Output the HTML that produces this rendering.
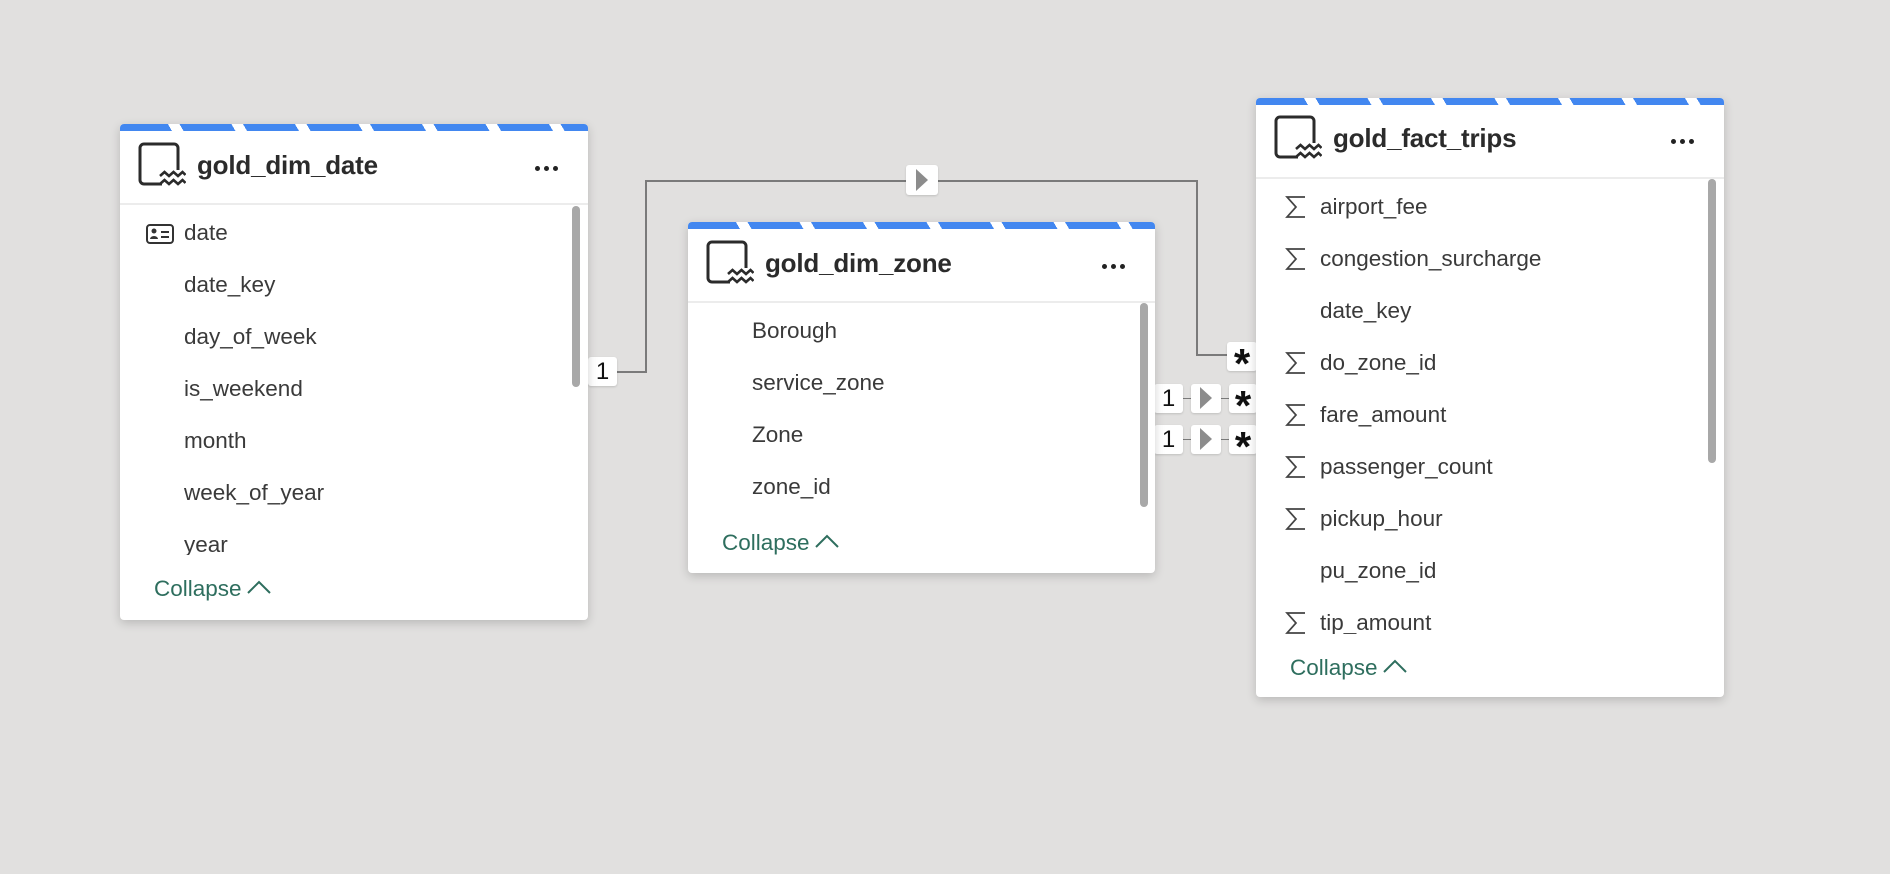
<!DOCTYPE html>
<html><head><meta charset="utf-8"><style>
*{box-sizing:border-box;margin:0;padding:0}
body{width:1890px;height:874px;background:#e1e0df;position:relative;overflow:hidden;font-family:"Liberation Sans",sans-serif;color:#333}
.card{position:absolute;background:#fff;border-radius:4px;box-shadow:0 3px 10px rgba(0,0,0,.18);overflow:hidden}
.stripe{position:absolute;left:0;top:0;right:0;height:7px;background:repeating-linear-gradient(60deg,#4287f0 0 45px,#fff 45px 55px)}
.ti{position:absolute;left:18px;top:18px}
.title{position:absolute;left:77px;top:26px;font-size:26px;font-weight:bold;color:#2b2b2b;letter-spacing:-0.2px}
.dots{position:absolute;top:34px;width:30px;height:6px}
.dots i{display:inline-block;width:5px;height:5px;border-radius:50%;background:#222;margin-right:4px}
.sep{position:absolute;left:0;right:0;top:79px;height:2px;background:#ececec}
.list{position:absolute;left:0;right:0;top:81px;overflow:hidden}
.row{position:absolute;left:64px;font-size:22.5px;color:#3a3a3a;height:30px;line-height:30px;white-space:nowrap}
.sig{position:absolute;left:-35px;top:3px}
.sb{position:absolute;width:8px;border-radius:4px;background:#a8a8a8}
.col{position:absolute;left:34px;font-size:22.5px;color:#2e6e5e;height:30px;line-height:30px}
.col svg{vertical-align:middle;margin-left:4px;margin-top:-6px}
.ln{position:absolute;background:#7a7a7a}
.bx{position:absolute;background:#fff;border-radius:3px;box-shadow:0 1px 2px rgba(0,0,0,.15);font-size:24px;color:#111;text-align:center}
.ast{font-size:42px;font-weight:bold;line-height:44px}
.tri{width:0;height:0;border-top:11px solid transparent;border-bottom:11px solid transparent;border-left:12px solid #8c8c8c;position:absolute;left:10px;top:4px}
</style></head><body>

<svg width="0" height="0" style="position:absolute"><defs>
<symbol id="tb" viewBox="0 0 48 44"><path d="M24 42H6a4 4 0 0 1-4-4V6a4 4 0 0 1 4-4h30a4 4 0 0 1 4 4v22" fill="none" stroke="#2b2b2b" stroke-width="3"/><path d="M22 34l4.5-4 4.5 4 4.5-4 4.5 4 4.5-4 3 3M22 42l4.5-4 4.5 4 4.5-4 4.5 4 4.5-4 3 3" fill="none" stroke="#2b2b2b" stroke-width="2.6"/></symbol>
<symbol id="sg" viewBox="0 0 22 24"><path d="M20 2H2l9 10-9 10h18" fill="none" stroke="#444" stroke-width="1.7"/></symbol>
</defs></svg>

<div class="ln" style="left:617px;top:371px;width:30px;height:2px"></div>
<div class="ln" style="left:645px;top:180px;width:2px;height:193px"></div>
<div class="ln" style="left:645px;top:180px;width:553px;height:2px"></div>
<div class="ln" style="left:1196px;top:180px;width:2px;height:176px"></div>
<div class="ln" style="left:1196px;top:354px;width:32px;height:2px"></div>
<div class="ln" style="left:1180px;top:398px;width:50px;height:1px"></div>
<div class="ln" style="left:1180px;top:439px;width:50px;height:1px"></div>

<div class="bx" style="left:588px;top:357px;width:29px;height:29px;line-height:29px">1</div>
<div class="bx" style="left:906px;top:165px;width:32px;height:30px"><div class="tri"></div></div>
<div class="bx ast" style="left:1227px;top:342px;width:30px;height:29px">*</div>
<div class="bx" style="left:1154px;top:384px;width:29px;height:29px;line-height:29px">1</div>
<div class="bx" style="left:1191px;top:384px;width:30px;height:29px"><div class="tri" style="left:9px;top:3px"></div></div>
<div class="bx ast" style="left:1229px;top:384px;width:28px;height:29px">*</div>
<div class="bx" style="left:1154px;top:425px;width:29px;height:29px;line-height:29px">1</div>
<div class="bx" style="left:1191px;top:425px;width:30px;height:29px"><div class="tri" style="left:9px;top:3px"></div></div>
<div class="bx ast" style="left:1229px;top:425px;width:28px;height:29px">*</div>

<div class="card" style="left:120px;top:124px;width:468px;height:496px">
<div class="stripe"></div>
<svg class="ti" width="48" height="44"><use href="#tb"/></svg>
<div class="title">gold_dim_date</div>
<div class="dots" style="left:415px"><i></i><i></i><i></i></div>
<div class="sep"></div>
<div class="list" style="height:350px">
<div class="row" style="top:13px"><svg style="position:absolute;left:-38px;top:6px" width="28" height="20" viewBox="0 0 28 20"><rect x="1" y="1" width="26" height="18" rx="3" fill="none" stroke="#333" stroke-width="2"/><circle cx="8" cy="7" r="2.5" fill="#333"/><path d="M4 15a4 3 0 0 1 8 0z" fill="#333"/><path d="M15 8h8M15 13h8" stroke="#333" stroke-width="2"/></svg>date</div>
<div class="row" style="top:65px">date_key</div>
<div class="row" style="top:117px">day_of_week</div>
<div class="row" style="top:169px">is_weekend</div>
<div class="row" style="top:221px">month</div>
<div class="row" style="top:273px">week_of_year</div>
<div class="row" style="top:325px">year</div>
<div class="sb" style="left:452px;top:1px;height:181px"></div>
</div>
<div class="col" style="top:450px">Collapse<svg width="26" height="16"><path d="M2 14L13 3l11 11" fill="none" stroke="#2e6e5e" stroke-width="2"/></svg></div>
</div>

<div class="card" style="left:688px;top:222px;width:467px;height:351px">
<div class="stripe"></div>
<svg class="ti" width="48" height="44"><use href="#tb"/></svg>
<div class="title">gold_dim_zone</div>
<div class="dots" style="left:414px"><i></i><i></i><i></i></div>
<div class="sep"></div>
<div class="list" style="height:210px">
<div class="row" style="top:13px">Borough</div>
<div class="row" style="top:65px">service_zone</div>
<div class="row" style="top:117px">Zone</div>
<div class="row" style="top:169px">zone_id</div>
<div class="sb" style="left:452px;top:0px;height:204px"></div>
</div>
<div class="col" style="top:306px">Collapse<svg width="26" height="16"><path d="M2 14L13 3l11 11" fill="none" stroke="#2e6e5e" stroke-width="2"/></svg></div>
</div>

<div class="card" style="left:1256px;top:98px;width:468px;height:599px">
<div class="stripe"></div>
<svg class="ti" width="48" height="44" style="top:17px"><use href="#tb"/></svg>
<div class="title" style="top:25px">gold_fact_trips</div>
<div class="dots" style="left:415px;top:33px"><i></i><i></i><i></i></div>
<div class="sep"></div>
<div class="list" style="height:455px">
<div class="row" style="top:13px"><svg class="sig" width="22" height="24"><use href="#sg"/></svg>airport_fee</div>
<div class="row" style="top:65px"><svg class="sig" width="22" height="24"><use href="#sg"/></svg>congestion_surcharge</div>
<div class="row" style="top:117px">date_key</div>
<div class="row" style="top:169px"><svg class="sig" width="22" height="24"><use href="#sg"/></svg>do_zone_id</div>
<div class="row" style="top:221px"><svg class="sig" width="22" height="24"><use href="#sg"/></svg>fare_amount</div>
<div class="row" style="top:273px"><svg class="sig" width="22" height="24"><use href="#sg"/></svg>passenger_count</div>
<div class="row" style="top:325px"><svg class="sig" width="22" height="24"><use href="#sg"/></svg>pickup_hour</div>
<div class="row" style="top:377px">pu_zone_id</div>
<div class="row" style="top:429px"><svg class="sig" width="22" height="24"><use href="#sg"/></svg>tip_amount</div>
<div class="sb" style="left:452px;top:0px;height:284px"></div>
</div>
<div class="col" style="top:555px">Collapse<svg width="26" height="16"><path d="M2 14L13 3l11 11" fill="none" stroke="#2e6e5e" stroke-width="2"/></svg></div>
</div>

</body></html>
